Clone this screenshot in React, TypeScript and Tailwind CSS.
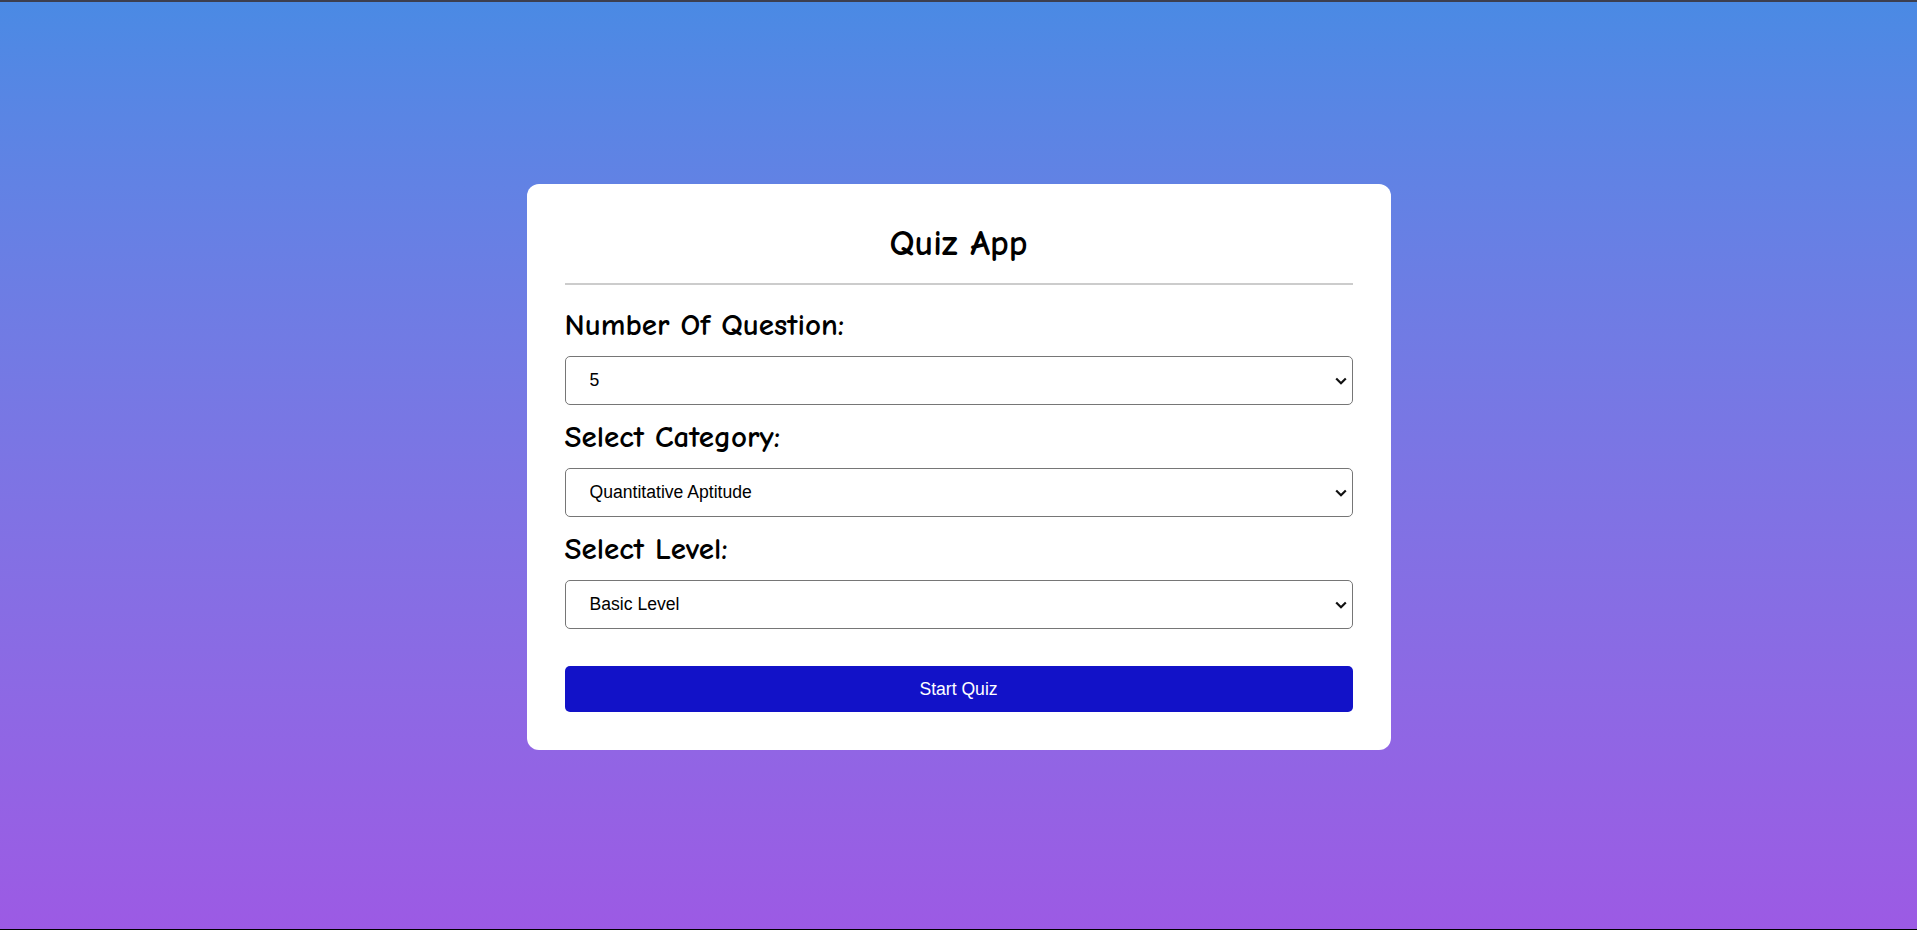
import { useState } from "react"

const comic = "font-['Comic_Sans_MS','Comic_Neue','Noto_Sans',sans-serif]"

function Field({ label, value, options, onChange }: { label: string; value: string; options: string[]; onChange: (v: string) => void }) {
  return (
    <div className="flex flex-col">
      <label className={`${comic} text-[31px] font-bold leading-[36px] text-black pt-[4px] mb-[13px]`}>{label}</label>
      <div className="relative">
        <select
          value={value}
          onChange={(e) => onChange(e.target.value)}
          className="h-[49px] w-full appearance-none rounded-[5px] border border-[#767676] bg-white pl-[24px] pr-[30px] font-['Liberation_Sans',Arial,sans-serif] text-[17.6px] text-black"
        >
          {options.map((o) => (
            <option key={o} value={o}>{o}</option>
          ))}
        </select>
        <svg
          className="pointer-events-none absolute right-[6px] top-1/2 -translate-y-1/2"
          width="12"
          height="8"
          viewBox="0 0 12 8"
          fill="none"
        >
          <path d="M1.2 1.5 6 6.2l4.8-4.7" stroke="#111" strokeWidth="2.2" />
        </svg>
      </div>
    </div>
  )
}

export default function App() {
  const [count, setCount] = useState("5")
  const [category, setCategory] = useState("Quantitative Aptitude")
  const [level, setLevel] = useState("Basic Level")

  return (
    <div className="h-[930px] w-full border-t-2 border-b border-t-[#3c3f4f] border-b-black bg-gradient-to-b from-[#4a8ae4] to-[#9c5ae4] flex items-start justify-center pt-[182px]">
      <div className="w-[864px] rounded-xl bg-white px-[38px] pt-[38px] pb-[38px]">
        <h1 className={`${comic} text-center text-[36px] font-bold leading-[44px] text-black`}>Quiz App</h1>
        <hr className="mt-[17px] mb-[18px] border-t-2 border-[#cccccc]" />

        <div className="flex flex-col gap-[10px]">
          <Field label="Number Of Question:" value={count} onChange={setCount} options={["5", "10", "15", "20"]} />
          <Field
            label="Select Category:"
            value={category}
            onChange={setCategory}
            options={["Quantitative Aptitude", "Logical Reasoning", "Verbal Ability"]}
          />
          <Field label="Select Level:" value={level} onChange={setLevel} options={["Basic Level", "Medium Level", "Hard Level"]} />
        </div>

        <button className="mt-[37px] h-[46px] w-full rounded-[5px] bg-[#1212c8] font-['Liberation_Sans',Arial,sans-serif] text-[17.6px] text-white">
          Start Quiz
        </button>
      </div>
    </div>
  )
}
